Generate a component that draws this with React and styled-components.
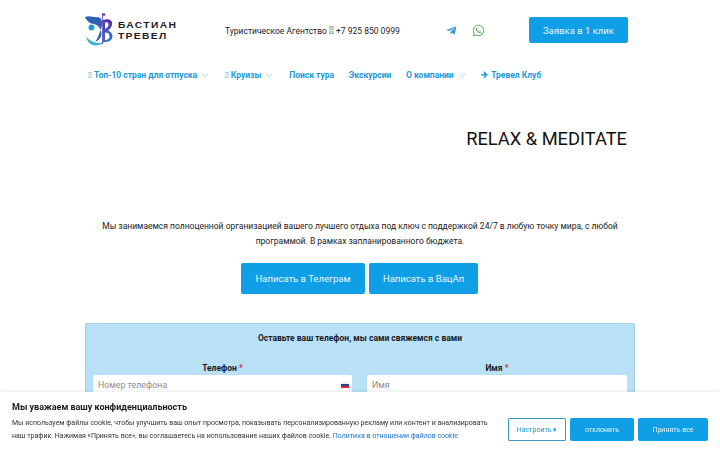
import React from 'react';
import styled, { createGlobalStyle } from 'styled-components';
import { FaTelegramPlane, FaWhatsapp } from 'react-icons/fa';
import { ChevronDown } from 'lucide-react';

const Global = createGlobalStyle`
  html, body { margin: 0; padding: 0; height: 100%; overflow: hidden; background: #fff; }
  body { font-family: Roboto, "Liberation Sans", sans-serif; color: #111; }
  * { box-sizing: border-box; }
`;

const Page = styled.div`
  width: 720px;
  height: 450px;
  overflow: hidden;
  padding: 0 85px;
`;

const Header = styled.header`
  height: 60px;
  display: flex;
  align-items: center;
`;

const LogoLink = styled.div`
  width: 120px;
  display: flex;
  align-items: center;
  gap: 4px;
`;

const LogoText = styled.div`
  font-family: "Liberation Sans", sans-serif;
  font-size: 9.5px;
  line-height: 11px;
  font-weight: 700;
  letter-spacing: 1.25px;
  color: #1c1c24;
  transform: scaleX(1.08);
  transform-origin: left center;
`;

const Contact = styled.div`
  width: 175px;
  margin-left: 20px;
  font-size: 8.5px;
  color: #222;
  white-space: nowrap;
`;

const Tofu = styled.span`
  font-size: 11px;
  line-height: 1;
`;

const Socials = styled.div`
  margin-left: 46px;
  width: 83px;
  display: flex;
  align-items: center;
  gap: 15px;
`;

const Button = styled.button`
  border: 0;
  border-radius: 2px;
  background: #0f9fe6;
  color: #e8f6fe;
  font-family: inherit;
  font-size: ${p => p.$size || 9.5}px;
  padding: 0;
  width: ${p => p.$w}px;
  height: ${p => p.$h}px;
`;

const Nav = styled.nav`
  height: 30px;
  display: flex;
  align-items: center;
  gap: 14.7px;
  margin-left: 3px;
`;

const NavItem = styled.a`
  display: flex;
  align-items: center;
  gap: 4px;
  font-size: 8.5px;
  font-weight: 700;
  color: #1a9ad8;
  white-space: nowrap;
  svg { color: #9fb6c4; }
`;

const Hero = styled.section`
  padding-top: 34px;
  display: flex;
  flex-direction: column;
  align-items: center;
`;

const Title = styled.h1`
  align-self: flex-end;
  margin: 0 8px 0 0;
  font-size: 18.3px;
  font-weight: 400;
  line-height: 30px;
  color: #111;
`;

const Lead = styled.p`
  margin: 65px 0 0;
  width: 530px;
  text-align: center;
  font-size: 8.5px;
  line-height: 15px;
  color: #222;
`;

const Actions = styled.div`
  margin: 14px 1px 0 0;
  display: flex;
  gap: 4px;
`;

const FormCard = styled.section`
  margin-top: 29px;
  height: 120px;
  background: #b8e1f8;
  border: 1px solid #a6cfe6;
  border-radius: 2px;
  padding: 9px 7px 0;
`;

const FormTitle = styled.div`
  font-size: 8.5px;
  font-weight: 700;
  line-height: 10px;
  text-align: center;
  color: #1a1a22;
`;

const Fields = styled.div`
  margin-top: 20px;
  display: grid;
  grid-template-columns: 259px 260px;
  gap: 15px;
`;

const Label = styled.div`
  font-size: 8.5px;
  font-weight: 700;
  line-height: 10px;
  text-align: center;
  color: #1a1a22;
  margin-bottom: 2px;
  span { color: #d0324f; }
`;

const Input = styled.div`
  height: 20px;
  background: #fff;
  border-radius: 2px;
  padding: 0 3px 0 5px;
  display: flex;
  align-items: center;
  justify-content: space-between;
  font-size: 8.8px;
  color: #8d8d8d;
`;

const Flag = styled.i`
  width: 8px;
  height: 6px;
  background: linear-gradient(#eee 0 33%, #2a3f9d 33% 66%, #d6283a 66%);
`;

const Cookie = styled.aside`
  position: fixed;
  left: 0;
  right: 0;
  bottom: 0;
  height: 58px;
  background: #fff;
  box-shadow: 0 0 4px rgba(0, 0, 0, 0.12);
  padding: 9px 12px 0;
  display: flex;
  justify-content: space-between;
`;

const CookieTitle = styled.div`
  font-size: 9px;
  font-weight: 700;
  line-height: 12px;
  color: #1a1a22;
`;

const CookieText = styled.p`
  margin: 4px 0 0;
  font-size: 7px;
  line-height: 12.5px;
  color: #333;
  white-space: nowrap;
  a { color: #1a73c5; }
`;

const CookieActions = styled.div`
  margin-top: 17px;
  display: flex;
  gap: 4px;
`;

const Outline = styled.button`
  width: 58px;
  height: 23px;
  padding: 0;
  background: #fff;
  border: 1.5px solid #3a9cc2;
  border-radius: 1px;
  font-family: inherit;
  font-size: 7px;
  color: #1a9ad8;
`;

const Logo = () => (
  <svg width="29" height="36" viewBox="0 0 29 36">
    <defs>
      <linearGradient id="bLobe" x1="0" y1="0" x2="0" y2="1">
        <stop offset="0" stopColor="#5b2aa8" />
        <stop offset="1" stopColor="#2c7cc6" />
      </linearGradient>
    </defs>
    <path d="M0 5 C5 3 9 6 13 5 C18 6 18 13 15.5 18 C14 14 12 13 9 12 C5 12 2 9 0 5Z" fill="#2d5fb4" />
    <circle cx="6.5" cy="15.5" r="3" fill="#2a9ad6" />
    <path d="M15.5 18 C18 22 16 28 10 30 C13 26 14 22 15.5 18Z" fill="#2d6fb8" />
    <path d="M1 25 C4 36 15 35 21 29 C15 33 7 31 1 25Z" fill="#35b0e0" />
    <path d="M18 8 C25 6 28 9 27 13 C26 16 24 18 23 18.5 C27 20 29 25 26 28 C24 30 21 30 18 30Z M20 10.5 V17 C22.5 16 23.5 14 23.5 12.5 C23.5 10.5 22 10 20 10.5Z M20 20.5 V28 C22.5 28 24.5 27 24.5 24 C24.5 21.5 23 20.5 20 20.5Z" fill="url(#bLobe)" fillRule="evenodd" />
    <path d="M17.6 1 V32" stroke="#6a3ab8" strokeWidth="0.9" />
    <circle cx="19" cy="2.5" r="1.3" fill="#6a2aa8" />
  </svg>
);

const NavEntry = ({ children, more }) => (
  <NavItem>
    <span>{children}</span>
    {more && <ChevronDown size={9} />}
  </NavItem>
);

export default function App() {
  return (
    <Page>
      <Global />
      <Header>
        <LogoLink>
          <Logo />
          <LogoText>БАСТИАН<br />ТРЕВЕЛ</LogoText>
        </LogoLink>
        <Contact>Туристическое Агентство <Tofu>{'\u{10FFFD}'}</Tofu> +7 925 850 0999</Contact>
        <Socials>
          <FaTelegramPlane size={11} color="#3d97d3" />
          <FaWhatsapp size={13} color="#62b368" />
        </Socials>
        <Button $w={99} $h={26}>Заявка в 1 клик</Button>
      </Header>
      <Nav>
        <NavEntry more>{'\u{10FFFD}'} Топ-10 стран для отпуска</NavEntry>
        <NavEntry more>{'\u{10FFFD}'} Круизы</NavEntry>
        <NavEntry>Поиск тура</NavEntry>
        <NavEntry>Экскурсии</NavEntry>
        <NavEntry more>О компании</NavEntry>
        <NavEntry>✈ Тревел Клуб</NavEntry>
      </Nav>
      <Hero>
        <Title>RELAX &amp; MEDITATE</Title>
        <Lead>
          Мы занимаемся полноценной организацией вашего лучшего отдыха под ключ с поддержкой 24/7 в любую точку мира, с любой программой. В рамках запланированного бюджета.
        </Lead>
        <Actions>
          <Button $w={124} $h={31}>Написать в Телеграм</Button>
          <Button $w={109} $h={31}>Написать в ВацАп</Button>
        </Actions>
      </Hero>
      <FormCard>
        <FormTitle>Оставьте ваш телефон, мы сами свяжемся с вами</FormTitle>
        <Fields>
          <div>
            <Label>Телефон <span>*</span></Label>
            <Input>Номер телефона<Flag /></Input>
          </div>
          <div>
            <Label>Имя <span>*</span></Label>
            <Input>Имя</Input>
          </div>
        </Fields>
      </FormCard>
      <Cookie>
        <div>
          <CookieTitle>Мы уважаем вашу конфиденциальность</CookieTitle>
          <CookieText>
            Мы используем файлы cookie, чтобы улучшить ваш опыт просмотра, показывать персонализированную рекламу или контент и анализировать<br />
            наш трафик. Нажимая «Принять все», вы соглашаетесь на использование наших файлов cookie. <a>Политика в отношении файлов cookie</a>
          </CookieText>
        </div>
        <CookieActions>
          <Outline>Настроить ▾</Outline>
          <Button $w={64} $h={23} $size={7}>отклонять</Button>
          <Button $w={70} $h={23} $size={7}>Принять все</Button>
        </CookieActions>
      </Cookie>
    </Page>
  );
}
